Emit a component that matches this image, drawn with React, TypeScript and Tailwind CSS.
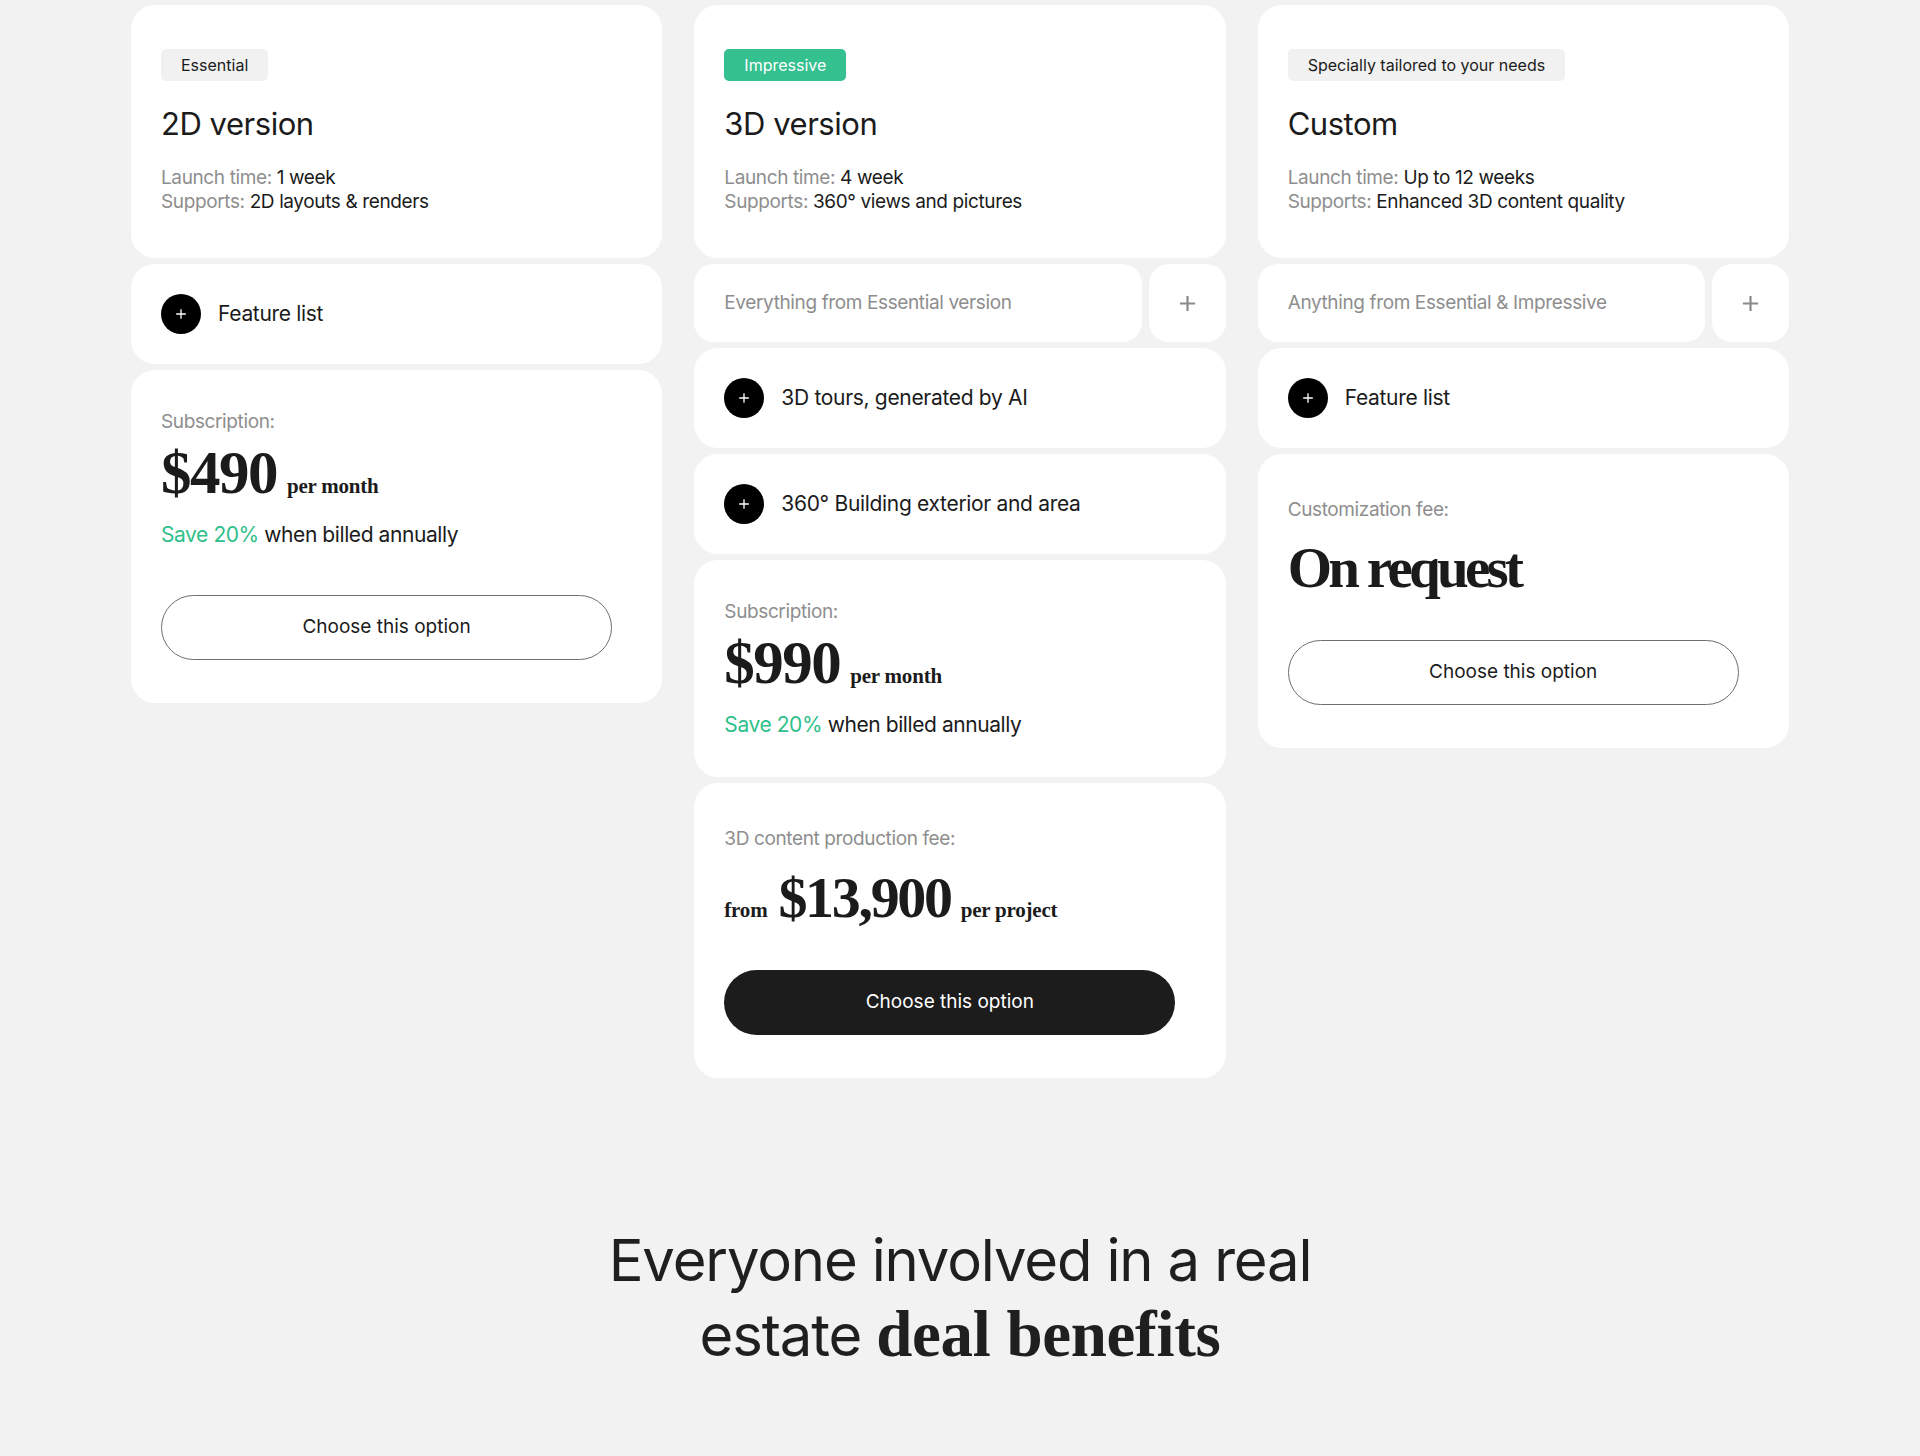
import React from 'react';

const PlusIcon: React.FC<{ className?: string; strokeWidth?: number }> = ({ className, strokeWidth = 2 }) => (
  <svg viewBox="0 0 20 20" fill="none" stroke="currentColor" strokeWidth={strokeWidth} strokeLinecap="butt" className={className}>
    <path d="M10 2v16M2 10h16" />
  </svg>
);

const Card: React.FC<{ className?: string; children: React.ReactNode }> = ({ className = '', children }) => (
  <div className={`bg-white rounded-[24px] ${className}`}>{children}</div>
);

interface HeaderProps {
  badge: string;
  badgeGreen?: boolean;
  title: string;
  launch: string;
  supports: string;
}

const HeaderCard: React.FC<HeaderProps> = ({ badge, badgeGreen, title, launch, supports }) => (
  <Card className="px-[30px] pt-[44px] pb-[44px]">
    <span
      className={
        badgeGreen
          ? 'inline-flex h-[32px] items-center rounded-[5px] bg-[#34c08f] px-[20px] text-[16px] text-white'
          : 'inline-flex h-[32px] items-center rounded-[5px] bg-[#f1f1f1] px-[20px] text-[16px] text-[#1b1b1b]'
      }
    >
      {badge}
    </span>
    <h2 className="mt-[24px] text-[31px] leading-[38px] tracking-[-0.015em] text-[#1b1b1b]">{title}</h2>
    <div className="mt-[23px] text-[19px] leading-[24px] tracking-[-0.02em] text-[#1b1b1b]">
      <p>
        <span className="text-[#8e8e8e]">Launch time:</span> {launch}
      </p>
      <p>
        <span className="text-[#8e8e8e]">Supports:</span> {supports}
      </p>
    </div>
  </Card>
);

const FeatureRow: React.FC<{ label: string }> = ({ label }) => (
  <Card className="flex items-center gap-[17px] px-[30px] py-[30px]">
    <span className="grid h-[40px] w-[40px] place-items-center rounded-full bg-black text-white">
      <PlusIcon className="h-[12px] w-[12px]" strokeWidth={2.2} />
    </span>
    <span className="text-[21px] leading-[24px] tracking-[-0.015em] text-[#1b1b1b]">{label}</span>
  </Card>
);

const IncludesRow: React.FC<{ label: string }> = ({ label }) => (
  <div className="flex gap-[7px]">
    <div className="flex h-[78px] flex-1 items-center rounded-[20px] bg-white px-[30px] text-[19px] tracking-[-0.02em] text-[#8e8e8e]">
      {label}
    </div>
    <div className="grid h-[78px] w-[77px] place-items-center rounded-[20px] bg-white text-[#8a8a8a]">
      <PlusIcon className="h-[19px] w-[19px]" strokeWidth={2.3} />
    </div>
  </div>
);

const ChooseButton: React.FC<{ dark?: boolean }> = ({ dark }) => (
  <button
    className={
      dark
        ? 'flex h-[65px] w-[451px] items-center justify-center rounded-full bg-[#1c1c1c] text-[19px] text-white'
        : 'flex h-[65px] w-[451px] items-center justify-center rounded-full border border-[#6e6e6e] bg-white text-[19px] text-[#1b1b1b]'
    }
  >
    Choose this option
  </button>
);

const serif = "font-['Liberation_Serif',serif] font-bold text-[#1b1b1b]";

const SubscriptionCard: React.FC<{ price: string; withButton?: boolean }> = ({ price, withButton }) => (
  <Card className={withButton ? 'px-[30px] pt-[40px] pb-[43px]' : 'px-[30px] pt-[40px] pb-[40px]'}>
    <p className="text-[19px] leading-[24px] tracking-[-0.02em] text-[#8e8e8e]">Subscription:</p>
    <div className={`mt-[10px] flex items-baseline gap-[10px] ${serif}`}>
      <span className="text-[61px] leading-[58px] tracking-[-0.025em]">{price}</span>
      <span className="text-[21px] leading-[24px] tracking-[-0.01em]">per month</span>
    </div>
    <p className="mt-[21px] text-[21px] leading-[24px] tracking-[-0.02em] text-[#1b1b1b]">
      <span className="text-[#2fbf8b]">Save 20%</span> when billed annually
    </p>
    {withButton && (
      <div className="mt-[48px]">
        <ChooseButton />
      </div>
    )}
  </Card>
);

export default function App() {
  return (
    <div className="min-h-[1456px] bg-[#f2f2f2] font-[Inter,sans-serif] text-[#1b1b1b]">
      <div className="mx-auto grid w-[1658px] grid-cols-3 items-start gap-x-[32px] pt-[5px]">
        {/* Essential */}
        <div className="flex flex-col gap-[6px]">
          <HeaderCard badge="Essential" title="2D version" launch="1 week" supports="2D layouts & renders" />
          <FeatureRow label="Feature list" />
          <SubscriptionCard price="$490" withButton />
        </div>

        {/* Impressive */}
        <div className="flex flex-col gap-[6px]">
          <HeaderCard badge="Impressive" badgeGreen title="3D version" launch="4 week" supports="360° views and pictures" />
          <IncludesRow label="Everything from Essential version" />
          <FeatureRow label="3D tours, generated by AI" />
          <FeatureRow label="360° Building exterior and area" />
          <SubscriptionCard price="$990" />
          <Card className="px-[30px] pt-[44px] pb-[43px]">
            <p className="text-[19px] leading-[24px] tracking-[-0.02em] text-[#8e8e8e]">3D content production fee:</p>
            <div className={`mt-[19px] flex items-baseline ${serif}`}>
              <span className="mr-[11px] text-[21px] leading-[24px] tracking-[-0.01em]">from</span>
              <span className="mr-[10px] text-[58px] leading-[56px] tracking-[-0.04em]">$13,900</span>
              <span className="text-[21px] leading-[24px] tracking-[-0.01em]">per project</span>
            </div>
            <div className="mt-[44px]">
              <ChooseButton dark />
            </div>
          </Card>
        </div>

        {/* Custom */}
        <div className="flex flex-col gap-[6px]">
          <HeaderCard
            badge="Specially tailored to your needs"
            title="Custom"
            launch="Up to 12 weeks"
            supports="Enhanced 3D content quality"
          />
          <IncludesRow label="Anything from Essential & Impressive" />
          <FeatureRow label="Feature list" />
          <Card className="px-[30px] pt-[44px] pb-[43px]">
            <p className="text-[19px] leading-[24px] tracking-[-0.02em] text-[#8e8e8e]">Customization fee:</p>
            <p className={`mt-[18px] text-[57px] leading-[56px] tracking-[-0.065em] ${serif}`}>On request</p>
            <div className="mt-[44px]">
              <ChooseButton />
            </div>
          </Card>
        </div>
      </div>

      <h2 className="mt-[145px] text-center text-[58px] leading-[74px] tracking-[-0.02em] text-[#1f1f1f]">
        Everyone involved in a real
        <br />
        estate <span className="font-['Liberation_Serif',serif] text-[65px] font-bold tracking-[-0.005em]">deal benefits</span>
      </h2>
    </div>
  );
}
